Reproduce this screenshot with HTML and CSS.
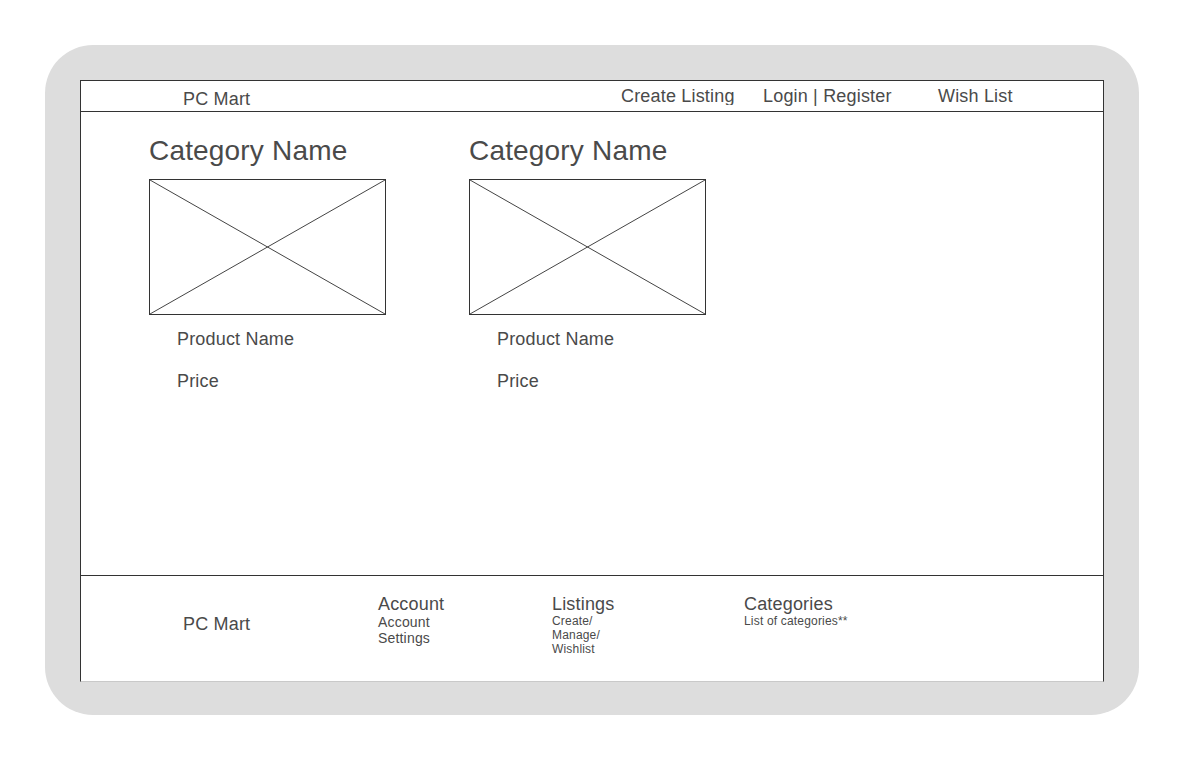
FILE: index.html
```html
<!DOCTYPE html>
<html>
<head>
<meta charset="utf-8">
<title>PC Mart</title>
<link rel="stylesheet" href="styles.css">
</head>
<body>
<div class="frame">
  <div class="screen">
    <header class="topbar">
      <div class="brand">PC Mart</div>
      <nav class="nav">
        <a class="nav-item nav-create">Create Listing</a>
        <a class="nav-item nav-login">Login | Register</a>
        <a class="nav-item">Wish List</a>
      </nav>
    </header>
    <main class="content">
      <section class="category">
        <h2 class="category-title">Category Name</h2>
        <svg class="placeholder" width="237" height="136" viewBox="0 0 237 136">
          <rect x="0.5" y="0.5" width="236" height="135" fill="#fff" stroke="#333" stroke-width="1"/>
          <line x1="1" y1="1" x2="236" y2="135" stroke="#444" stroke-width="1"/>
          <line x1="236" y1="1" x2="1" y2="135" stroke="#444" stroke-width="1"/>
        </svg>
        <div class="product-name">Product Name</div>
        <div class="price">Price</div>
      </section>
      <section class="category">
        <h2 class="category-title">Category Name</h2>
        <svg class="placeholder" width="237" height="136" viewBox="0 0 237 136">
          <rect x="0.5" y="0.5" width="236" height="135" fill="#fff" stroke="#333" stroke-width="1"/>
          <line x1="1" y1="1" x2="236" y2="135" stroke="#444" stroke-width="1"/>
          <line x1="236" y1="1" x2="1" y2="135" stroke="#444" stroke-width="1"/>
        </svg>
        <div class="product-name">Product Name</div>
        <div class="price">Price</div>
      </section>
    </main>
    <footer class="footer">
      <div class="footer-col footer-brand">PC Mart</div>
      <div class="footer-col footer-account">
        <div class="footer-heading">Account</div>
        <div class="footer-sub">Account<br>Settings</div>
      </div>
      <div class="footer-col footer-listings">
        <div class="footer-heading">Listings</div>
        <div class="footer-small">Create/<br>Manage/<br>Wishlist</div>
      </div>
      <div class="footer-col">
        <div class="footer-heading">Categories</div>
        <div class="footer-small">List of categories**</div>
      </div>
    </footer>
  </div>
</div>
</body>
</html>
```

FILE: styles.css
```css
* { box-sizing: border-box; }

html, body {
  margin: 0;
  padding: 0;
  background: #ffffff;
}

body {
  font-family: "Liberation Sans", Arial, sans-serif;
  color: #4a4a4a;
  letter-spacing: 0.18px;
}

.frame {
  margin: 45px 0 0 45px;
  width: 1094px;
  height: 670px;
  padding: 35px;
  background: #dddddd;
  border-radius: 48px;
}

.screen {
  width: 1024px;
  height: 602px;
  background: #ffffff;
  border: 1px solid #333333;
  border-bottom-color: #c9c9c9;
  display: flex;
  flex-direction: column;
}

.topbar {
  height: 31px;
  flex: none;
  border-bottom: 1px solid #333333;
  display: flex;
  align-items: flex-start;
  padding-left: 102px;
}

.brand {
  font-size: 18px;
  line-height: 20px;
  margin-top: 8px;
  width: 438px;
}

.nav {
  display: flex;
  margin-top: 5px;
}

.nav-item {
  font-size: 18px;
  line-height: 20px;
  white-space: nowrap;
  color: #4a4a4a;
}

.nav-create {
  width: 142px;
  height: 19px;
  overflow: hidden;
}
.nav-login { width: 175px; }

.content {
  flex: 1;
  display: flex;
  gap: 83px;
  padding: 23px 0 0 68px;
}

.category {
  width: 237px;
}

.category-title {
  margin: 0 0 12px 0;
  font-size: 28px;
  line-height: 32px;
  font-weight: normal;
  white-space: nowrap;
}

.placeholder {
  display: block;
}

.product-name,
.price {
  font-size: 18px;
  line-height: 20px;
  padding-left: 28px;
}

.product-name { margin-top: 14px; }
.price { margin-top: 22px; }

.footer {
  height: 106px;
  flex: none;
  border-top: 1px solid #333333;
  display: flex;
  align-items: flex-start;
  padding: 18px 0 0 102px;
}

.footer-col { flex: none; }

.footer-brand {
  width: 195px;
  font-size: 18px;
  line-height: 20px;
  margin-top: 20px;
}

.footer-account { width: 174px; }
.footer-listings { width: 192px; }

.footer-heading {
  font-size: 18px;
  line-height: 20px;
}

.footer-sub {
  font-size: 14px;
  line-height: 16px;
}

.footer-small {
  font-size: 12px;
  line-height: 14px;
}
```
